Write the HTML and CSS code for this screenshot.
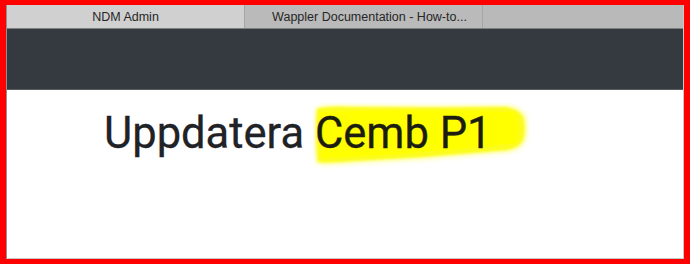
FILE: index.html
```html
<!DOCTYPE html>
<html lang="sv">
<head>
<meta charset="utf-8">
<title>NDM Admin</title>
<link rel="stylesheet" href="styles.css">
</head>
<body>
  <div class="window">
    <div class="tabs">
      <div class="tab tab-active">NDM Admin</div>
      <div class="tab tab-second">Wappler Documentation - How-to...</div>
      <div class="tab-fill"></div>
    </div>
    <div class="navbar"></div>
    <main class="content">
      <h1 class="title">Uppdatera <span class="mark"><svg class="brush" viewBox="0 0 216 66" width="216" height="66" aria-hidden="true">
            <defs>
              <filter id="halo" x="-10%" y="-30%" width="120%" height="160%">
                <feGaussianBlur stdDeviation="2.4"/>
              </filter>
              <filter id="soft" x="-10%" y="-20%" width="120%" height="140%">
                <feGaussianBlur stdDeviation="1.1"/>
              </filter>
            </defs>
            <path d="M3 5 C10 2 24 2 36 2.5 L120 3 L194 2.5 C203 4 210 7 213 14 C215 22 215 31 212 38 C209 45 203 47 195 49 L170 51 L110 56 L40 60 C25 61 12 62 4 61 C1 50 1 20 3 5 Z" fill="#ffff60" opacity="0.7" filter="url(#halo)"/>
            <path d="M4 6 C10 4 22 3.5 34 4 L120 4.5 L192 4 C200 5 207 8 210 14 C212 21 212 30 210 37 C207 43 202 45 194 47 L170 49 L110 54 L40 58 C25 59 12 60 5 59 C3 48 3 20 4 6 Z" fill="#fcfc1c" filter="url(#soft)"/>
            <path d="M7 9 C60 7 140 7 200 9 C206 16 207 30 203 40 C150 46 80 52 9 55 C6 40 6 22 7 9 Z" fill="#ffff00"/>
          </svg>Cemb P1</span></h1>
    </main>
  </div>
</body>
</html>
```

FILE: styles.css
```css
html, body {
  margin: 0;
  height: 100%;
}

body {
  background: #ff0000;
  padding: 5px 6px 5px 6px;
  box-sizing: border-box;
  height: 264px;
  overflow: hidden;
}

.window {
  height: 100%;
  box-sizing: border-box;
  background: #ffffff;
  border-left: 1px solid #8d8f92;
  border-right: 1px solid #c9c9c9;
  border-bottom: 1px solid #c9c9c9;
  display: flex;
  flex-direction: column;
}

.tabs {
  display: flex;
  height: 23px;
  flex: none;
  background: #b9b9b9;
  border-bottom: 1px solid #7f7f7f;
}

.tab {
  width: 238px;
  box-sizing: border-box;
  flex: none;
  display: flex;
  align-items: center;
  justify-content: center;
  font-family: "Liberation Sans", Arial, sans-serif;
  font-size: 12.5px;
  color: #262626;
  border-right: 1px solid #a5a5a5;
  white-space: nowrap;
}

.tab-active {
  background: #d0d0d0;
}

.tab-second {
  background: #bababa;
  padding-left: 12px;
}

.tab-fill {
  flex: 1;
  background: #b9b9b9;
}

.navbar {
  height: 60px;
  flex: none;
  background: #353a41;
  border-bottom: 1px solid #595d62;
}

.content {
  flex: 1;
  padding: 18px 0 0 97px;
}

.title {
  margin: 0;
  font-family: Roboto, "Liberation Sans", sans-serif;
  font-weight: 400;
  font-size: 43.5px;
  line-height: 52px;
  color: #1f2226;
  -webkit-text-stroke: 0.3px #1f2226;
}

.mark {
  position: relative;
  z-index: 0;
  color: #1c1d10;
  -webkit-text-stroke: 0.3px #1c1d10;
}

.brush {
  position: absolute;
  left: -2px;
  top: -5px;
  z-index: -1;
}
```
